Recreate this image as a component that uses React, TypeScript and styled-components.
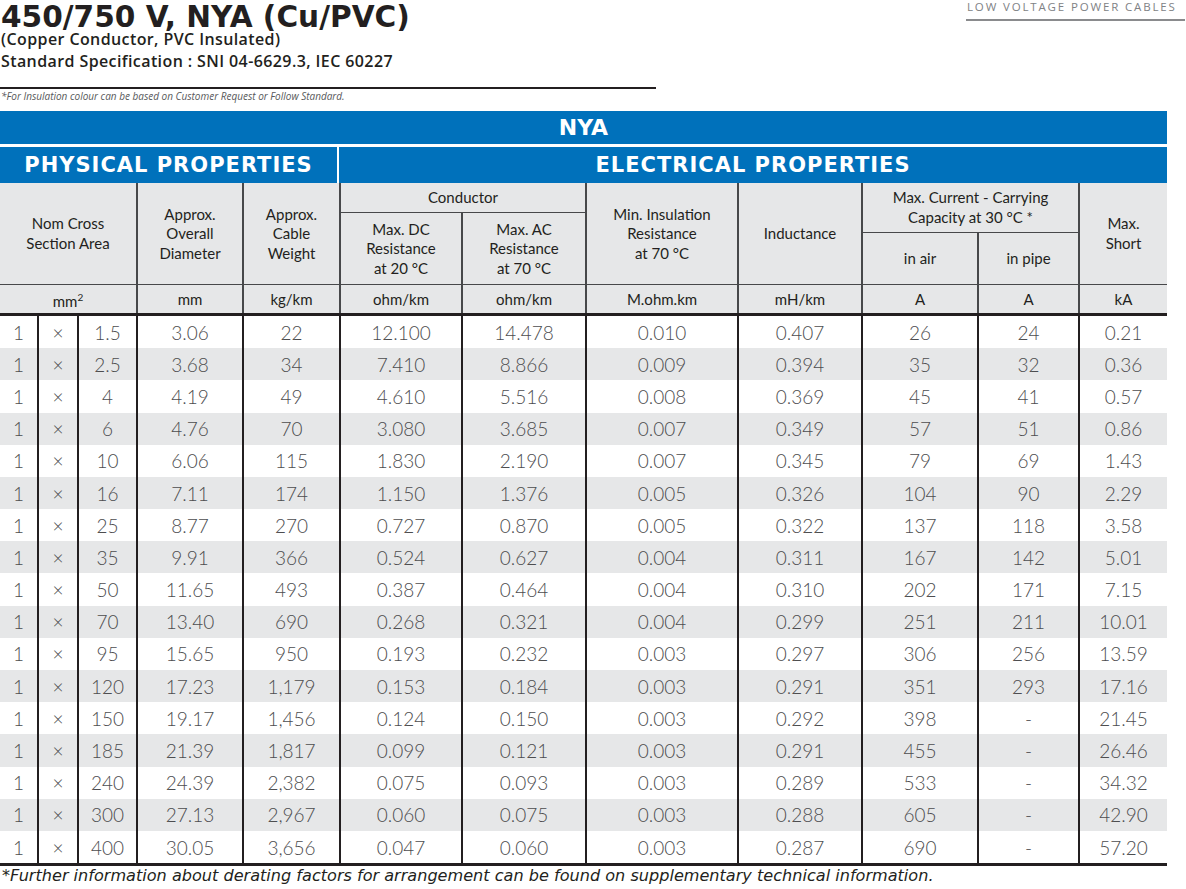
import React from "react";
import styled, { createGlobalStyle } from "styled-components";

const GlobalStyle = createGlobalStyle`
  html, body { margin: 0; padding: 0; background: #ffffff; }
  body { font-family: Lato, "Open Sans", sans-serif; color: #231f20; }
  * { box-sizing: border-box; }
`;

const COLS = "37px 38px 57px 104px 95px 120px 122px 150px 122px 114px 99px 87px";
const BLUE = "#0071bb";
const GRAY = "#e6e7e8";

const Page = styled.div`
  width: 1186px;
  display: flex;
  flex-direction: column;
`;

const TopRow = styled.div`
  display: flex;
  justify-content: space-between;
  align-items: flex-start;
`;

const TitleBlock = styled.div`
  padding: 3.5px 0 0 1px;
  display: flex;
  flex-direction: column;
`;

const Title = styled.h1`
  margin: 0;
  font-family: "DejaVu Sans", sans-serif;
  font-weight: 700;
  font-size: 29.6px;
  line-height: 27.5px;
  letter-spacing: 0px;
  color: #231f20;
`;

const SubLine = styled.div<{ $lh: number }>`
  font-family: "Open Sans", sans-serif;
  font-weight: 600;
  font-size: 16px;
  line-height: ${(p) => p.$lh}px;
  letter-spacing: 0.4px;
  color: #231f20;
`;

const Brand = styled.div`
  width: 219px;
  margin-right: 1px;
  padding: 1px 0 6px 1px;
  border-bottom: 2px solid #8a8b8d;
  font-family: "Open Sans", sans-serif;
  font-weight: 500;
  font-size: 11.5px;
  line-height: 12px;
  letter-spacing: 1.85px;
  color: #808285;
  text-transform: uppercase;
  white-space: nowrap;
`;

const Rule = styled.div`
  width: 656px;
  margin-top: 11.4px;
  border-top: 2px solid #231f20;
`;

const Note = styled.p`
  margin: 1px 0 0 1px;
  font-family: "Open Sans", sans-serif;
  font-style: italic;
  font-size: 10px;
  line-height: 12px;
  color: #58595b;
`;

const Table = styled.div`
  width: 1167px;
  margin-top: 9px;
  display: flex;
  flex-direction: column;
`;

const Banner = styled.div`
  height: 33px;
  margin-bottom: 3px;
  background: ${BLUE};
  display: flex;
  align-items: center;
  justify-content: center;
  font-family: "DejaVu Sans", sans-serif;
  font-weight: 700;
  font-size: 22px;
  color: #ffffff;
`;

const SectionRow = styled.div`
  display: flex;
  gap: 2px;
  height: 36px;
`;

const SectionBar = styled.div<{ $w: number }>`
  width: ${(p) => p.$w}px;
  background: ${BLUE};
  display: flex;
  align-items: center;
  justify-content: center;
  font-family: "DejaVu Sans", sans-serif;
  font-weight: 700;
  font-size: 21px;
  letter-spacing: 1px;
  color: #ffffff;
`;

const HeaderGrid = styled.div`
  display: grid;
  grid-template-columns: ${COLS};
  grid-template-rows: 29px 19px 51px 28px;
  column-gap: 2px;
  row-gap: 1px;
  background: #47484a;
  border-bottom: 3px solid #231f20;
`;

const HCell = styled.div<{ $col: string; $row: string }>`
  grid-column: ${(p) => p.$col};
  grid-row: ${(p) => p.$row};
  background: ${GRAY};
  display: flex;
  align-items: center;
  justify-content: center;
  text-align: center;
  padding-top: 1px;
  font-family: Lato, sans-serif;
  font-weight: 400;
  font-size: 15px;
  line-height: 19.5px;
  color: #231f20;
`;

const Sup = styled.sup`
  font-size: 10px;
  vertical-align: 6px;
`;

const Body = styled.div`
  display: flex;
  flex-direction: column;
  border-bottom: 3px solid #231f20;
`;

const BodyRow = styled.div<{ $alt: boolean }>`
  display: grid;
  grid-template-columns: ${COLS};
  column-gap: 2px;
  height: 32.2px;
  background: #231f20;
  --cell-bg: ${(p) => (p.$alt ? GRAY : "#ffffff")};
`;

const DCell = styled.div`
  background: var(--cell-bg);
  display: flex;
  align-items: center;
  justify-content: center;
  font-family: Lato, sans-serif;
  font-weight: 300;
  font-size: 19px;
  color: #4d4d4f;
`;

const Footer = styled.p`
  margin: 1px 0 0;
  padding-left: 2px;
  font-family: "DejaVu Sans", sans-serif;
  font-style: italic;
  font-size: 16.1px;
  line-height: 18px;
  color: #231f20;
  white-space: nowrap;
`;

const rows: string[][] = [
  ["1.5", "3.06", "22", "12.100", "14.478", "0.010", "0.407", "26", "24", "0.21"],
  ["2.5", "3.68", "34", "7.410", "8.866", "0.009", "0.394", "35", "32", "0.36"],
  ["4", "4.19", "49", "4.610", "5.516", "0.008", "0.369", "45", "41", "0.57"],
  ["6", "4.76", "70", "3.080", "3.685", "0.007", "0.349", "57", "51", "0.86"],
  ["10", "6.06", "115", "1.830", "2.190", "0.007", "0.345", "79", "69", "1.43"],
  ["16", "7.11", "174", "1.150", "1.376", "0.005", "0.326", "104", "90", "2.29"],
  ["25", "8.77", "270", "0.727", "0.870", "0.005", "0.322", "137", "118", "3.58"],
  ["35", "9.91", "366", "0.524", "0.627", "0.004", "0.311", "167", "142", "5.01"],
  ["50", "11.65", "493", "0.387", "0.464", "0.004", "0.310", "202", "171", "7.15"],
  ["70", "13.40", "690", "0.268", "0.321", "0.004", "0.299", "251", "211", "10.01"],
  ["95", "15.65", "950", "0.193", "0.232", "0.003", "0.297", "306", "256", "13.59"],
  ["120", "17.23", "1,179", "0.153", "0.184", "0.003", "0.291", "351", "293", "17.16"],
  ["150", "19.17", "1,456", "0.124", "0.150", "0.003", "0.292", "398", "-", "21.45"],
  ["185", "21.39", "1,817", "0.099", "0.121", "0.003", "0.291", "455", "-", "26.46"],
  ["240", "24.39", "2,382", "0.075", "0.093", "0.003", "0.289", "533", "-", "34.32"],
  ["300", "27.13", "2,967", "0.060", "0.075", "0.003", "0.288", "605", "-", "42.90"],
  ["400", "30.05", "3,656", "0.047", "0.060", "0.003", "0.287", "690", "-", "57.20"],
];

type H = { col: string; row: string; lines: React.ReactNode[] };

const headers: H[] = [
  { col: "1 / span 3", row: "1 / span 3", lines: ["Nom Cross", "Section Area"] },
  { col: "4", row: "1 / span 3", lines: ["Approx.", "Overall", "Diameter"] },
  { col: "5", row: "1 / span 3", lines: ["Approx.", "Cable", "Weight"] },
  { col: "6 / span 2", row: "1", lines: ["Conductor"] },
  { col: "6", row: "2 / span 2", lines: ["Max. DC", "Resistance", "at 20 °C"] },
  { col: "7", row: "2 / span 2", lines: ["Max. AC", "Resistance", "at 70 °C"] },
  { col: "8", row: "1 / span 3", lines: ["Min. Insulation", "Resistance", "at 70 °C"] },
  { col: "9", row: "1 / span 3", lines: ["Inductance"] },
  { col: "10 / span 2", row: "1 / span 2", lines: ["Max. Current - Carrying", "Capacity at 30 °C *"] },
  { col: "10", row: "3", lines: ["in air"] },
  { col: "11", row: "3", lines: ["in pipe"] },
  { col: "12", row: "1 / span 3", lines: ["Max.", "Short"] },
  { col: "1 / span 3", row: "4", lines: [<>mm<Sup>2</Sup></>] },
  { col: "4", row: "4", lines: ["mm"] },
  { col: "5", row: "4", lines: ["kg/km"] },
  { col: "6", row: "4", lines: ["ohm/km"] },
  { col: "7", row: "4", lines: ["ohm/km"] },
  { col: "8", row: "4", lines: ["M.ohm.km"] },
  { col: "9", row: "4", lines: ["mH/km"] },
  { col: "10", row: "4", lines: ["A"] },
  { col: "11", row: "4", lines: ["A"] },
  { col: "12", row: "4", lines: ["kA"] },
];

export default function App() {
  return (
    <Page>
      <GlobalStyle />
      <TopRow>
        <TitleBlock>
          <Title>450/750 V, NYA (Cu/PVC)</Title>
          <SubLine $lh={17}>(Copper Conductor, PVC Insulated)</SubLine>
          <SubLine $lh={27.6}>Standard Specification : SNI 04-6629.3, IEC 60227</SubLine>
        </TitleBlock>
        <Brand>Low Voltage Power Cables</Brand>
      </TopRow>
      <Rule />
      <Note>*For Insulation colour can be based on Customer Request or Follow Standard.</Note>
      <Table>
        <Banner>NYA</Banner>
        <SectionRow>
          <SectionBar $w={337}>PHYSICAL PROPERTIES</SectionBar>
          <SectionBar $w={828}>ELECTRICAL PROPERTIES</SectionBar>
        </SectionRow>
        <HeaderGrid>
          {headers.map((h, i) => (
            <HCell key={i} $col={h.col} $row={h.row}>
              <div>
                {h.lines.map((l, j) => (
                  <div key={j}>{l}</div>
                ))}
              </div>
            </HCell>
          ))}
        </HeaderGrid>
        <Body>
          {rows.map((r, i) => (
            <BodyRow key={i} $alt={i % 2 === 1}>
              <DCell>1</DCell>
              <DCell>×</DCell>
              {r.map((v, j) => (
                <DCell key={j}>{v}</DCell>
              ))}
            </BodyRow>
          ))}
        </Body>
      </Table>
      <Footer>
        *Further information about derating factors for arrangement can be found on supplementary technical information.
      </Footer>
    </Page>
  );
}
